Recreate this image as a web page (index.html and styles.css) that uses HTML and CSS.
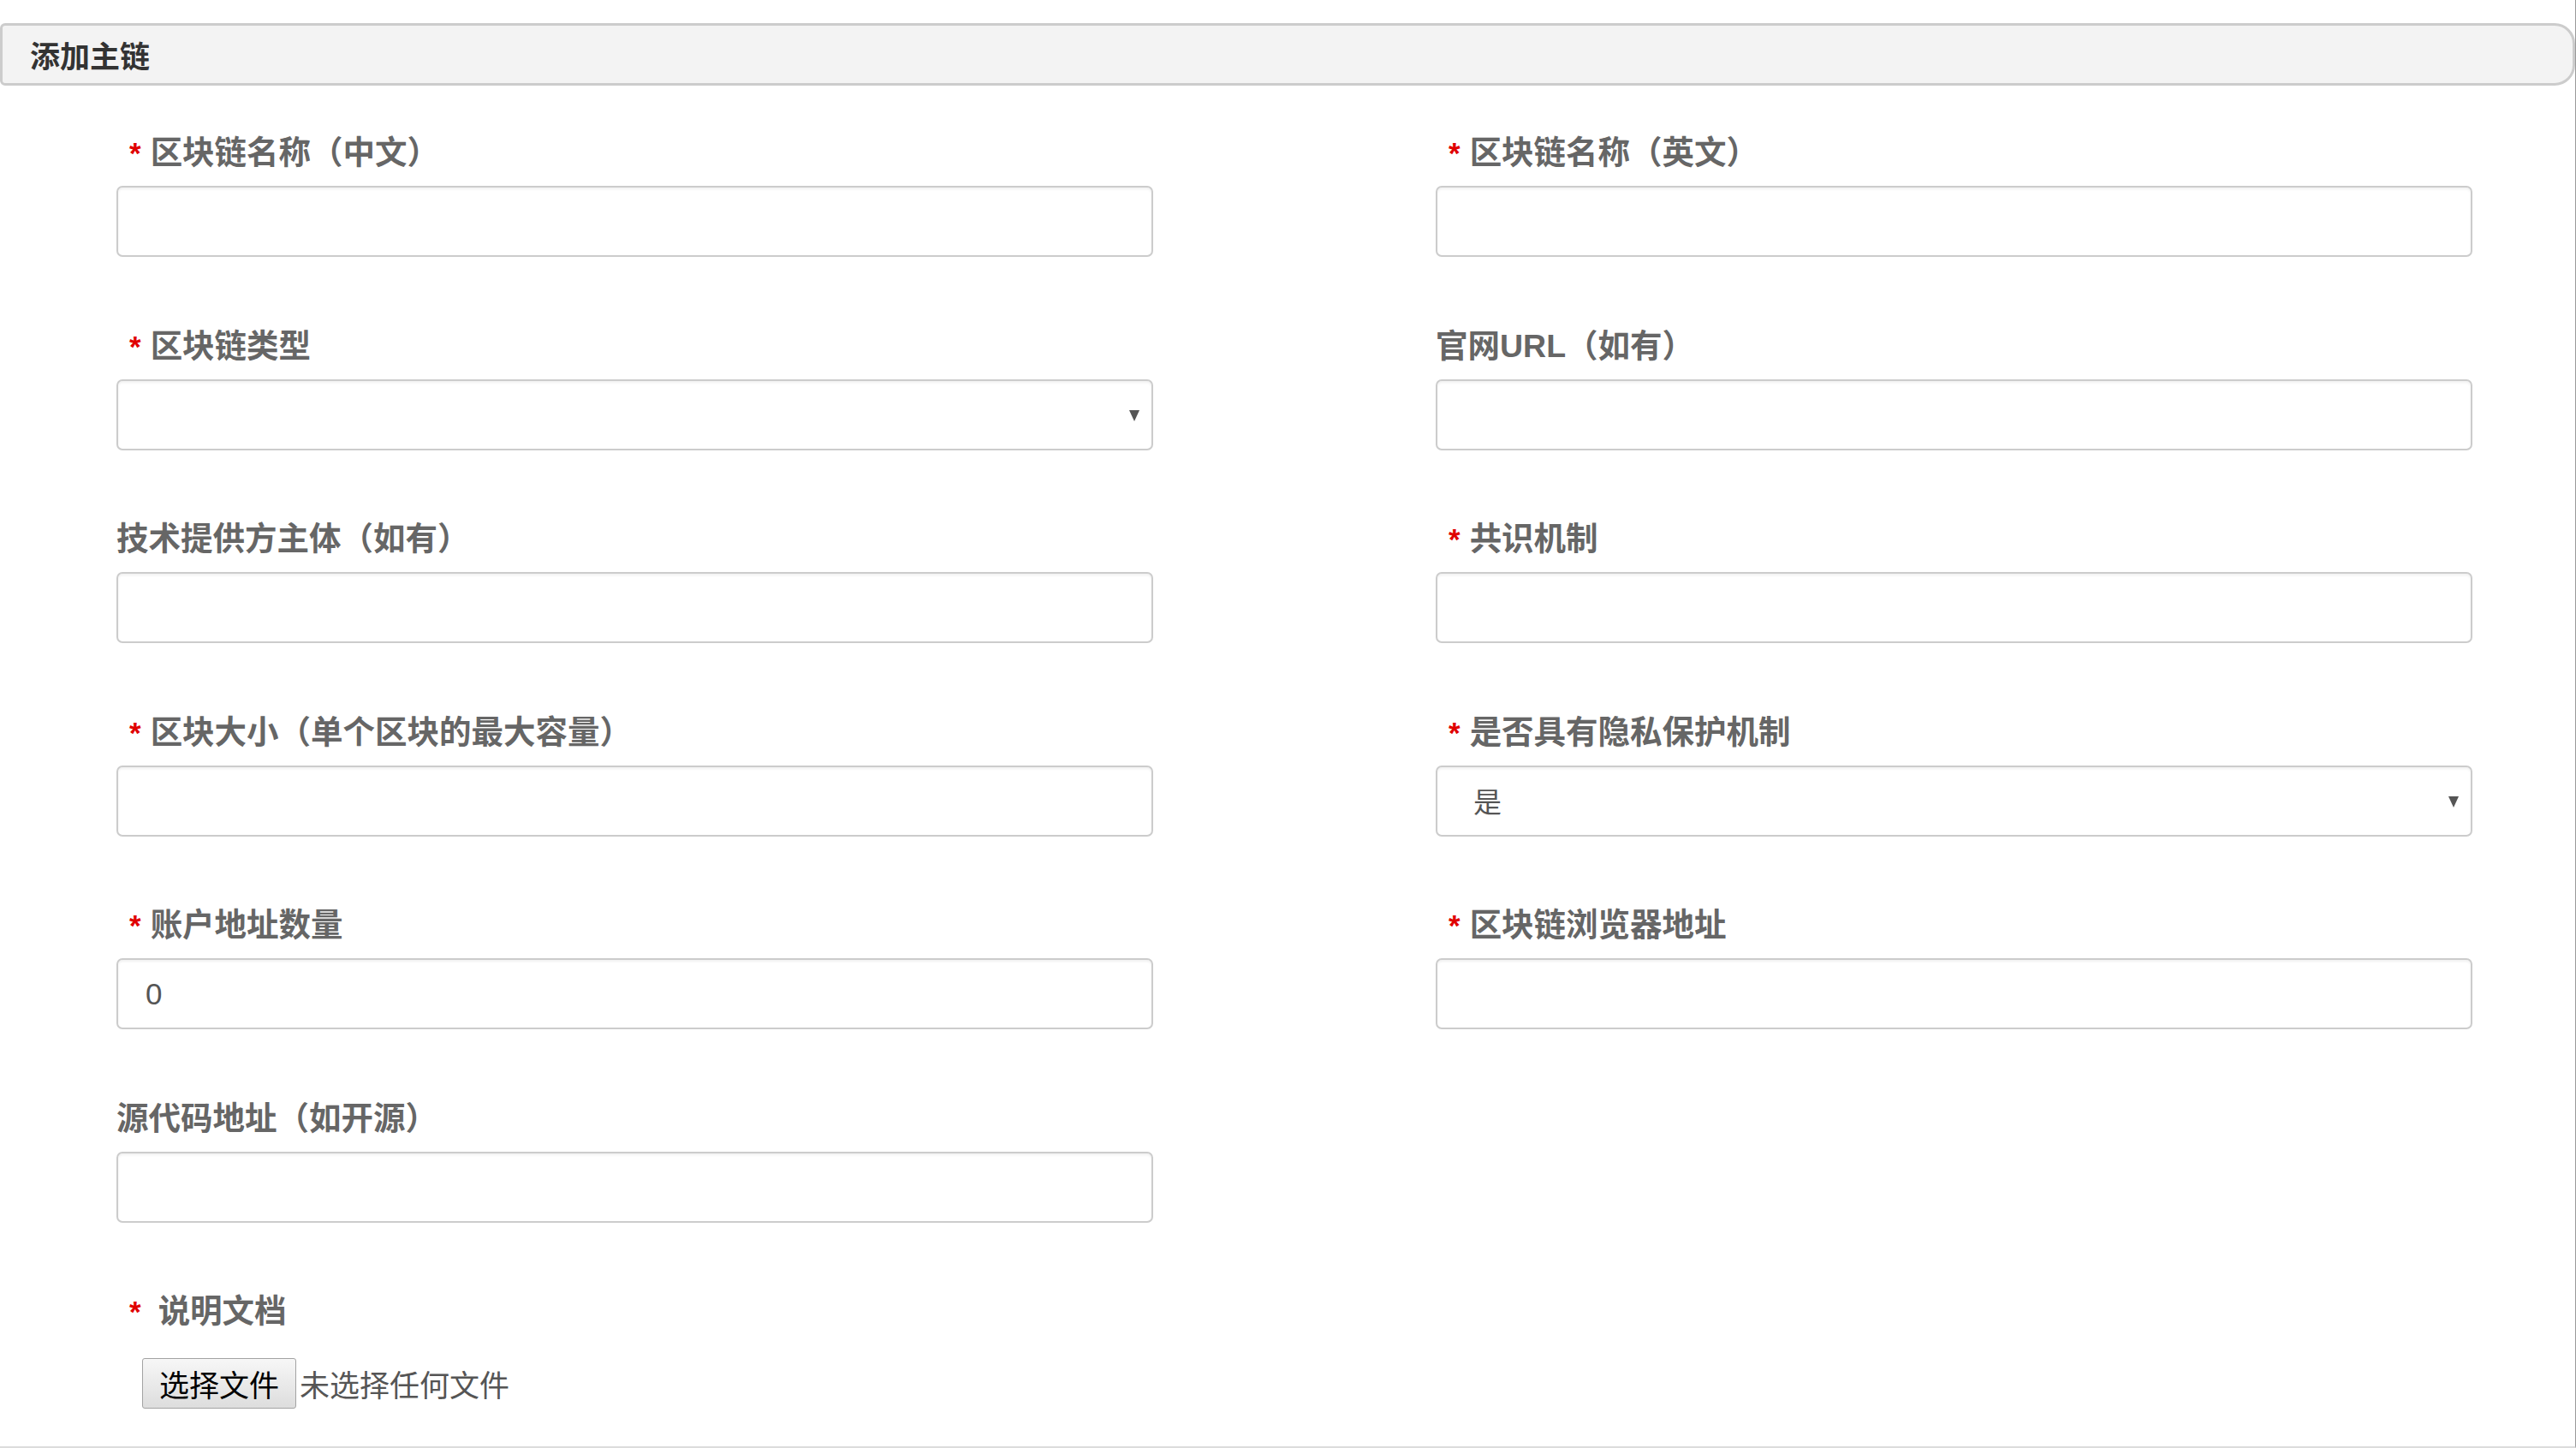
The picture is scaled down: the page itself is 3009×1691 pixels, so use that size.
FILE: index.html
```html
<!DOCTYPE html>
<html lang="zh-CN">
<head>
<meta charset="utf-8">
<title>添加主链</title>
<link rel="stylesheet" href="styles.css">
</head>
<body>
<div class="page">
  <div class="panel-head">添加主链</div>
  <form class="form">
    <div class="field">
      <label class="label req-label"><span class="req">*</span>区块链名称（中文）</label>
      <input class="input" type="text">
    </div>
    <div class="field">
      <label class="label req-label"><span class="req">*</span>区块链名称（英文）</label>
      <input class="input" type="text">
    </div>

    <div class="field">
      <label class="label req-label"><span class="req">*</span>区块链类型</label>
      <div class="select"><span class="select-text"></span><span class="arrow"></span></div>
    </div>
    <div class="field">
      <label class="label">官网URL（如有）</label>
      <input class="input" type="text">
    </div>

    <div class="field">
      <label class="label">技术提供方主体（如有）</label>
      <input class="input" type="text">
    </div>
    <div class="field">
      <label class="label req-label"><span class="req">*</span>共识机制</label>
      <input class="input" type="text">
    </div>

    <div class="field">
      <label class="label req-label"><span class="req">*</span>区块大小（单个区块的最大容量）</label>
      <input class="input" type="text">
    </div>
    <div class="field">
      <label class="label req-label"><span class="req">*</span>是否具有隐私保护机制</label>
      <div class="select"><span class="select-text">是</span><span class="arrow"></span></div>
    </div>

    <div class="field">
      <label class="label req-label"><span class="req">*</span>账户地址数量</label>
      <input class="input" type="text" value="0">
    </div>
    <div class="field">
      <label class="label req-label"><span class="req">*</span>区块链浏览器地址</label>
      <input class="input" type="text">
    </div>

    <div class="field">
      <label class="label">源代码地址（如开源）</label>
      <input class="input" type="text">
    </div>
    <div class="field"></div>

    <div class="field field-full">
      <label class="label req-label"><span class="req req-wide">*</span>说明文档</label>
      <div class="file-row">
        <button type="button" class="file-btn">选择文件</button>
        <span class="file-name">未选择任何文件</span>
      </div>
    </div>
  </form>
</div>
</body>
</html>
```

FILE: styles.css
```css
html, body {
  margin: 0;
  padding: 0;
  background: #fff;
}

body {
  font-family: "Liberation Sans", "Noto Sans CJK SC", sans-serif;
}

.page {
  width: 3009px;
  height: 1691px;
  box-sizing: border-box;
  border-right: 1px solid #9a9a9a;
  border-bottom: 2px solid #dcdcdc;
  padding-top: 27px;
  overflow: hidden;
}

.panel-head {
  box-sizing: border-box;
  height: 73px;
  border: 3px solid #cccccc;
  border-radius: 6px 24px 24px 6px;
  background: #f3f3f3;
  padding-left: 32px;
  display: flex;
  align-items: center;
  font-size: 35px;
  font-weight: 700;
  color: #333;
}

.form {
  display: grid;
  grid-template-columns: 1211px 1211px;
  column-gap: 330px;
  row-gap: 78.5px;
  padding-left: 136px;
  margin: 53px 0 0 0;
}

.field {
  display: flex;
  flex-direction: column;
}

.field-full {
  grid-column: 1 / -1;
}

.label {
  display: block;
  height: 50px;
  line-height: 50px;
  margin-bottom: 14px;
  font-size: 37.5px;
  font-weight: 700;
  color: #666;
  white-space: nowrap;
}

.req-label {
  padding-left: 15px;
}

.req {
  color: #e00000;
  font-size: 35px;
  margin-right: 11px;
}

.req-wide {
  margin-right: 20px;
}

.input,
.select {
  box-sizing: border-box;
  width: 1211px;
  height: 83px;
  border: 2px solid #cccccc;
  border-radius: 7px;
  background: #fff;
  box-shadow: inset 0 2px 3px rgba(0, 0, 0, 0.06);
  font-family: "Liberation Sans", "Noto Sans CJK SC", sans-serif;
  font-size: 35px;
  color: #555;
  margin: 0;
  outline: none;
}

.input {
  padding: 0 32px;
}

.select {
  display: flex;
  align-items: center;
  justify-content: space-between;
  padding: 0 14px 0 42px;
}

.select-text {
  font-size: 33px;
}

.arrow {
  width: 0;
  height: 0;
  border-left: 6px solid transparent;
  border-right: 6px solid transparent;
  border-top: 13px solid #555;
  margin-top: 3px;
}

.file-row {
  display: flex;
  align-items: center;
  margin-top: 16px;
  padding-left: 30px;
}

.file-btn {
  box-sizing: border-box;
  height: 59px;
  padding: 0 19px;
  border: 1px solid #a3a3a3;
  border-radius: 3px;
  background: linear-gradient(#f7f7f7, #dddddd);
  font-family: "Liberation Sans", "Noto Sans CJK SC", sans-serif;
  font-size: 35px;
  color: #000;
  margin: 0;
}

.file-name {
  margin-left: 4px;
  font-size: 35px;
  color: #555;
}
```
